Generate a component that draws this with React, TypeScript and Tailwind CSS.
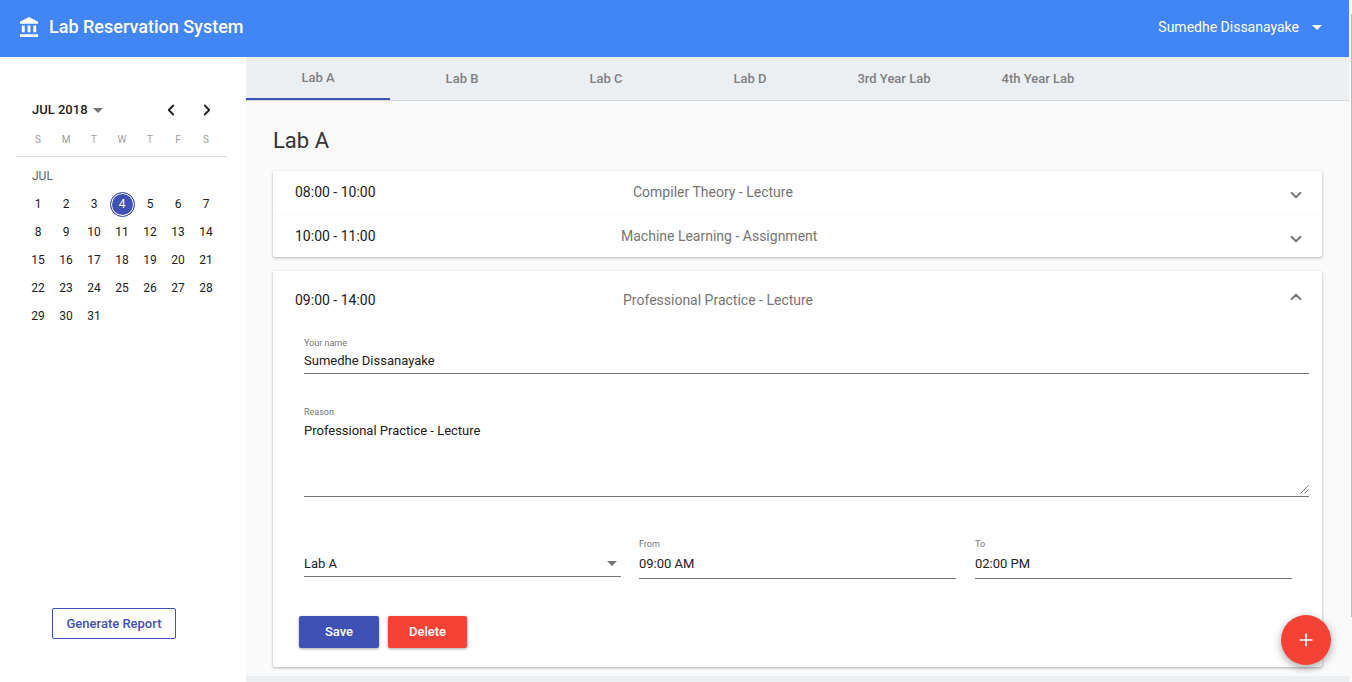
import { ChevronDown, ChevronLeft, ChevronRight, ChevronUp, Plus } from 'lucide-react';

const tabs = ['Lab A', 'Lab B', 'Lab C', 'Lab D', '3rd Year Lab', '4th Year Lab'];
const weekDays = ['S', 'M', 'T', 'W', 'T', 'F', 'S'];
const weeks = [
  [1, 2, 3, 4, 5, 6, 7],
  [8, 9, 10, 11, 12, 13, 14],
  [15, 16, 17, 18, 19, 20, 21],
  [22, 23, 24, 25, 26, 27, 28],
  [29, 30, 31],
];

function Caret({ className }: { className: string }) {
  return <span className={`h-0 w-0 border-x-[5px] border-t-[5px] border-x-transparent ${className}`} />;
}

function Calendar() {
  return (
    <div className="pt-[41px]">
      <div className="flex h-6 items-center pl-[32px]">
        <span className="text-[13px] font-medium text-[#212121]">JUL 2018</span>
        <Caret className="ml-[5px] border-t-[#757575]" />
        <ChevronLeft className="ml-[59px] h-[18px] w-[18px] text-[#212121]" strokeWidth={2.4} />
        <ChevronRight className="ml-[18px] h-[18px] w-[18px] text-[#212121]" strokeWidth={2.4} />
      </div>
      <div className="ml-4 mt-[10px] grid h-[25px] w-[211px] grid-cols-[repeat(7,28px)] border-b border-[#e0e0e0] pb-1 pl-2 text-center text-[10px] leading-[16px] text-[#9e9e9e]">
        {weekDays.map((d, i) => (
          <span key={i}>{d}</span>
        ))}
      </div>
      <div className="pl-[32px] pt-[11px] text-xs leading-[16px] text-[#616161]">JUL</div>
      <div className="mt-[6px] px-6">
        {weeks.map((week, i) => (
          <div key={i} className="grid h-7 grid-cols-[repeat(7,28px)] text-center text-xs text-[#212121]">
            {week.map((day) => (
              <div key={day} className="flex items-center justify-center">
                {day === 4 ? (
                  <span className="flex h-[25px] w-[25px] items-center justify-center rounded-full border border-[#3f51b5] bg-[#3f51b5] text-white shadow-[inset_0_0_0_1px_white]">
                    {day}
                  </span>
                ) : (
                  day
                )}
              </div>
            ))}
          </div>
        ))}
      </div>
    </div>
  );
}

function Row({ time, title, titleClass, open, border }: { time: string; title: string; titleClass: string; open?: boolean; border?: boolean }) {
  return (
    <div className={`flex h-[43px] items-center pl-[22px] pr-[17px] text-sm ${border ? 'border-t border-[#fafafa] pb-0' : 'pb-[2px]'}`}>
      <span className="w-[160px] text-[#212121]">{time}</span>
      <span className={`text-[#757575] ${titleClass}`}>{title}</span>
      <span className="flex-1" />
      {open ? (
        <ChevronUp className="mb-[6px] h-[18px] w-[18px] text-[#757575]" strokeWidth={2.4} />
      ) : (
        <ChevronDown className={`h-[18px] w-[18px] text-[#757575] ${border ? 'mt-[5px]' : 'mt-[6px]'}`} strokeWidth={2.4} />
      )}
    </div>
  );
}

function Field({ label, value, className, boxClass }: { label: string; value: string; className: string; boxClass: string }) {
  return (
    <div className={className}>
      <div className="h-[13px] text-[9px] leading-[13px] text-[#757575]">{label}</div>
      <div className={`flex items-center border-b border-[#757575] text-[13px] text-[#212121] ${boxClass}`}>{value}</div>
    </div>
  );
}

export default function App() {
  return (
    <div className="relative flex h-[682px] flex-col overflow-hidden bg-white font-['Roboto',sans-serif]">
      <header className="mr-[3px] flex h-[57px] shrink-0 items-center bg-[#4285f4] pb-[3px] pl-[18px] pr-[27px] text-white">
        <svg className="h-[23px] w-[23px]" viewBox="0 0 24 24" fill="currentColor">
          <path d="M4 10v7h3v-7H4zm6 0v7h3v-7h-3zM2 22h19v-3H2v3zm14-12v7h3v-7h-3zm-4.5-9L2 6v2h19V6l-9.5-5z" />
        </svg>
        <span className="mb-[2px] ml-[8px] text-[18px] font-medium">Lab Reservation System</span>
        <span className="ml-auto text-sm">Sumedhe Dissanayake</span>
        <Caret className="ml-[13px] border-t-white" />
      </header>

      <div className="flex min-h-0 flex-1">
        <aside className="flex w-[246px] shrink-0 flex-col bg-white">
          <Calendar />
          <div className="mt-auto pb-[43px] pl-[52px]">
            <button className="h-[31px] w-[124px] rounded-[2px] border border-[#3f51b5] text-[13px] font-medium text-[#3f51b5]">
              Generate Report
            </button>
          </div>
        </aside>

        <main className="flex min-w-0 flex-1 flex-col bg-[#fafafa]">
          <nav className="flex h-[44px] shrink-0 border-b border-[#d5d8da] bg-[#eceff1]">
            {tabs.map((tab, i) => (
              <div
                key={tab}
                className={`flex h-[43px] w-[144px] items-center justify-center text-[13px] font-medium text-[#808080] ${
                  i === 0 ? 'border-b-2 border-[#3f51b5]' : ''
                }`}
              >
                {tab}
              </div>
            ))}
          </nav>

          <div className="min-h-0 flex-1 pl-[27px] pr-[27px]">
            <h1 className="pt-[27px] text-[22px] leading-[26px] text-[#333]">Lab A</h1>
            <div className="mt-[17px] rounded-[2px] bg-white shadow-[0_1px_3px_rgba(0,0,0,0.3)]">
              <Row time="08:00 - 10:00" title="Compiler Theory - Lecture" titleClass="ml-[178px]" />
              <Row time="10:00 - 11:00" title="Machine Learning - Assignment" titleClass="ml-[166px]" border />
            </div>
            <div className="mt-[14px] h-[396px] rounded-[2px] bg-white shadow-[0_1px_3px_rgba(0,0,0,0.3)]">
              <div className="pt-[8px]">
                <Row time="09:00 - 14:00" title="Professional Practice - Lecture" titleClass="ml-[168px]" open />
              </div>
              <div className="pl-[31px] pr-[13px] pt-[15px]">
                <Field label="Your name" value="Sumedhe Dissanayake" className="" boxClass="h-[24px] pb-[2px]" />
                <div className="mt-[32px] text-[9px] leading-[13px] text-[#757575]">Reason</div>
                <div className="relative h-[78px] border-b border-[#757575] pt-[3px] text-[13px] leading-[18px] text-[#212121]">
                  Professional Practice - Lecture
                  <svg className="absolute bottom-[2px] right-0 h-[9px] w-[9px] text-[#757575]" viewBox="0 0 9 9">
                    <path d="M0.5 8.5L8.5 0.5M4.5 8.5L8.5 4.5" stroke="currentColor" fill="none" />
                  </svg>
                </div>
                <div className="mt-[41px] flex items-start gap-[18px]">
                  <div className="w-[317px] shrink-0 pt-[15px]">
                    <div className="flex h-[24px] items-center justify-between border-b border-[#757575] pb-[2px] pr-[4px] text-[13px] text-[#212121]">
                      Lab A
                      <Caret className="border-t-[#757575]" />
                    </div>
                  </div>
                  <Field label="From" value="09:00 AM" className="w-[317px] shrink-0" boxClass="h-[28px] pb-[2px]" />
                  <Field label="To" value="02:00 PM" className="ml-px w-[317px] shrink-0" boxClass="h-[28px] pb-[2px]" />
                </div>
              </div>
              <div className="mt-[37px] flex gap-[9px] pl-[26px]">
                <button className="h-[32px] w-[80px] rounded-[2px] bg-[#3f51b5] text-[13px] font-medium text-white shadow-[0_1px_3px_rgba(0,0,0,0.35)]">
                  Save
                </button>
                <button className="h-[32px] w-[79px] rounded-[2px] bg-[#f44336] text-[13px] font-medium text-white shadow-[0_1px_3px_rgba(0,0,0,0.35)]">
                  Delete
                </button>
              </div>
            </div>
          </div>
          <div className="h-[6px] shrink-0 bg-[#eceff1]" />
        </main>

        <div className="w-[3px] shrink-0 bg-[#fafafa]" />
      </div>

      <div className="absolute right-0 top-[14px] h-[603px] w-px bg-[#bdbdbd]" />
      <button className="absolute bottom-[17px] right-[21px] flex h-[50px] w-[50px] items-center justify-center rounded-full bg-[#f44336] text-white shadow-[0_3px_8px_rgba(0,0,0,0.35)]">
        <Plus className="h-[20px] w-[20px]" strokeWidth={2} />
      </button>
    </div>
  );
}
